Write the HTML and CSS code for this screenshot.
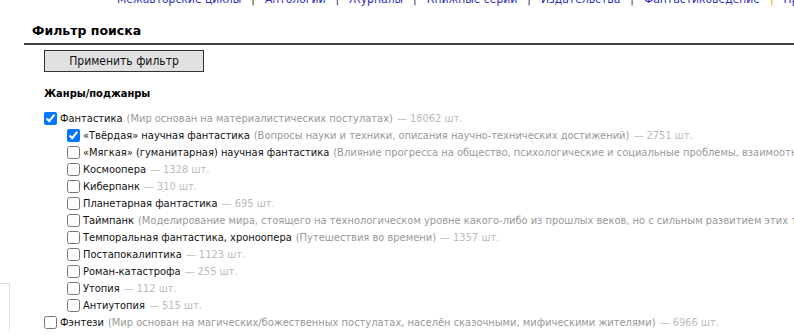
FILE: index.html
```html
<!DOCTYPE html>
<html lang="ru">
<head>
<meta charset="utf-8">
<title>Фильтр поиска</title>
<link rel="stylesheet" href="styles.css">
</head>
<body>
<nav class="topnav">
  <a href="#">Межавторские циклы</a><span class="sep">|</span><a href="#">Антологии</a><span class="sep">|</span><a href="#">Журналы</a><span class="sep">|</span><a href="#">Книжные серии</a><span class="sep">|</span><a href="#">Издательства</a><span class="sep">|</span><a href="#">Фантастиковедение</a><span class="sep sep-hot">|</span><a href="#">Премии</a>
</nav>
<div class="page">
  <aside class="side"><div class="side-box"></div></aside>
  <main class="panel">
    <div class="panel-title">Фильтр поиска</div>
    <div class="panel-body">
      <button class="apply" type="button">Применить фильтр</button>
      <div class="group-title">Жанры/поджанры</div>
      <ul class="genres">
        <li>
          <label class="row"><input type="checkbox" checked><span class="name">Фантастика</span> <span class="desc">(Мир основан на материалистических постулатах)</span> <span class="count">— 18062 шт.</span></label>
          <ul class="sub">
            <li><label class="row"><input type="checkbox" checked><span class="name">«Твёрдая» научная фантастика</span> <span class="desc">(Вопросы науки и техники, описания научно-технических достижений)</span> <span class="count">— 2751 шт.</span></label></li>
            <li><label class="row"><input type="checkbox"><span class="name">«Мягкая» (гуманитарная) научная фантастика</span> <span class="desc">(Влияние прогресса на общество, психологические и социальные проблемы, взаимоотношения людей)</span> <span class="count">— 1890 шт.</span></label></li>
            <li><label class="row"><input type="checkbox"><span class="name">Космоопера</span> <span class="count">— 1328 шт.</span></label></li>
            <li><label class="row"><input type="checkbox"><span class="name">Киберпанк</span> <span class="count">— 310 шт.</span></label></li>
            <li><label class="row"><input type="checkbox"><span class="name">Планетарная фантастика</span> <span class="count">— 695 шт.</span></label></li>
            <li><label class="row"><input type="checkbox"><span class="name">Таймпанк</span> <span class="desc">(Моделирование мира, стоящего на технологическом уровне какого-либо из прошлых веков, но с сильным развитием этих технологий)</span> <span class="count">— 101 шт.</span></label></li>
            <li><label class="row"><input type="checkbox"><span class="name">Темпоральная фантастика, хроноопера</span> <span class="desc">(Путешествия во времени)</span> <span class="count">— 1357 шт.</span></label></li>
            <li><label class="row"><input type="checkbox"><span class="name">Постапокалиптика</span> <span class="count">— 1123 шт.</span></label></li>
            <li><label class="row"><input type="checkbox"><span class="name">Роман-катастрофа</span> <span class="count">— 255 шт.</span></label></li>
            <li><label class="row"><input type="checkbox"><span class="name">Утопия</span> <span class="count">— 112 шт.</span></label></li>
            <li><label class="row"><input type="checkbox"><span class="name">Антиутопия</span> <span class="count">— 515 шт.</span></label></li>
          </ul>
        </li>
        <li>
          <label class="row"><input type="checkbox"><span class="name">Фэнтези</span> <span class="desc">(Мир основан на магических/божественных постулатах, населён сказочными, мифическими жителями)</span> <span class="count">— 6966 шт.</span></label>
        </li>
      </ul>
    </div>
  </main>
</div>
</body>
</html>
```
FILE: styles.css
```css
html, body {
  margin: 0;
  padding: 0;
  background: #ffffff;
  overflow: hidden;
}
body {
  font-family: "DejaVu Sans Condensed", "DejaVu Sans", Verdana, sans-serif;
  font-stretch: condensed;
  font-size: 11px;
  color: #000;
}
.topnav {
  margin-top: -8px;
  height: 15px;
  line-height: 15px;
  padding-left: 117px;
  white-space: nowrap;
  font-size: 12px;
}
.topnav a {
  color: #2b2bb8;
  text-decoration: none;
}
.sep {
  color: #333;
  margin: 0 10px;
}
.sep-hot {
  color: #e0a000;
}
.page {
  display: flex;
  align-items: stretch;
}
.side {
  flex: none;
  width: 10px;
  display: flex;
  flex-direction: column;
}
.side-box {
  margin-top: 276px;
  flex: 1;
  border-top: 1px solid #d6e0ea;
  border-right: 1px solid #d6e0ea;
}
.panel {
  flex: 1;
  margin-left: 14px;
  min-width: 0;
}
.panel-title {
  font-family: "DejaVu Sans", Verdana, sans-serif;
  font-stretch: normal;
  font-weight: bold;
  font-size: 12.5px;
  line-height: 14px;
  padding: 17px 0 5px 8px;
  border-bottom: 2px solid #444;
  white-space: nowrap;
}
.panel-body {
  padding-left: 20px;
  white-space: nowrap;
}
.apply {
  display: block;
  margin-top: 5px;
  width: 160px;
  height: 22px;
  font-family: "DejaVu Sans Condensed", "DejaVu Sans", Verdana, sans-serif;
  font-stretch: condensed;
  font-size: 12px;
  color: #111;
  background: #e1e1e1;
  border: 1px solid #333;
  border-radius: 0;
  padding: 0;
}
.group-title {
  font-weight: bold;
  margin-top: 15px;
  height: 14px;
  line-height: 14px;
}
.genres {
  list-style: none;
  margin: 9px 0 0 0;
  padding: 0;
}
.sub {
  list-style: none;
  margin: 0;
  padding: 0 0 0 23px;
}
.row {
  display: flex;
  align-items: center;
  height: 17px;
  white-space: nowrap;
}
.row input {
  margin: 0 3px 0 0;
  width: 13px;
  height: 13px;
  flex: none;
}
.row .name {
  color: #111;
}
.desc {
  color: #999;
  margin-left: 4px;
}
.count {
  color: #bbb;
  margin-left: 4px;
}
```
